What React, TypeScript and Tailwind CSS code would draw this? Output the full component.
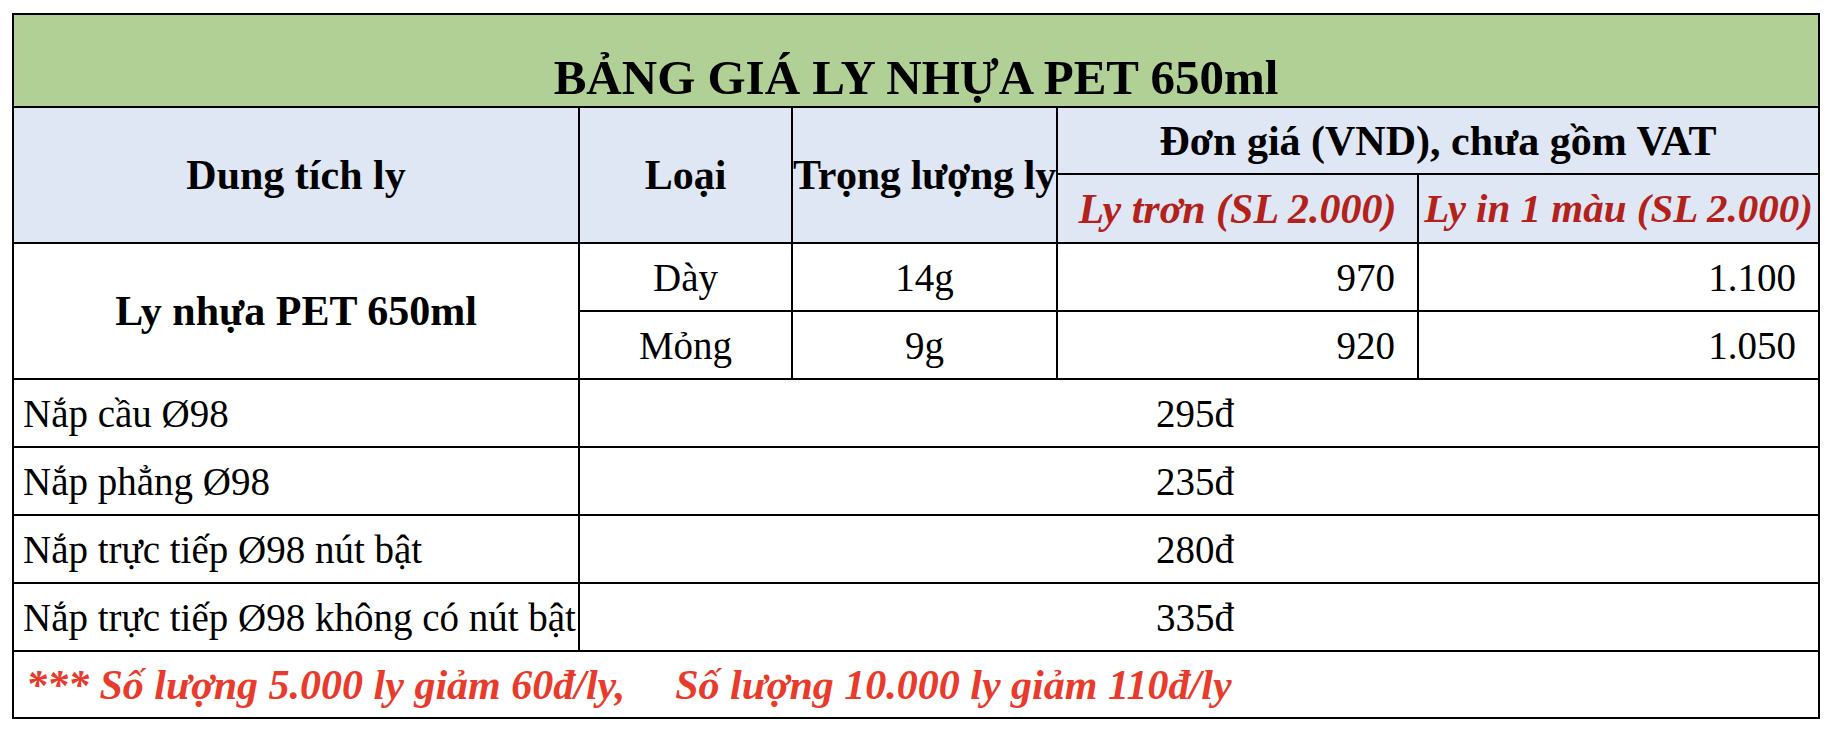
/**
 * Bảng giá ly nhựa PET 650ml — spreadsheet-style price table.
 */

const cell = 'border-2 border-black whitespace-nowrap p-0 align-middle leading-none';
const head = `${cell} bg-[#dfe6f4] text-center text-[42px] font-bold`;
const body = `${cell} text-[39px]`;

const lids = [
  { name: 'Nắp cầu Ø98', price: '295đ' },
  { name: 'Nắp phẳng Ø98', price: '235đ' },
  { name: 'Nắp trực tiếp Ø98 nút bật', price: '280đ' },
  { name: 'Nắp trực tiếp Ø98 không có nút bật', price: '335đ' },
];

export default function App() {
  return (
    <div className="h-[732px] w-[1836px] bg-white pl-[12px] pt-[13px] font-['Liberation_Serif','Times_New_Roman',serif] text-black">
      <table className="w-[1806px] table-fixed border-collapse">
        <colgroup>
          <col className="w-[566px]" />
          <col className="w-[213px]" />
          <col className="w-[265px]" />
          <col className="w-[361px]" />
          <col className="w-[401px]" />
        </colgroup>
        <tbody>
          <tr className="h-[93px]">
            <td
              colSpan={5}
              className={`${cell} bg-[#b0d095] pb-[4px] text-center !align-bottom text-[49px] font-bold`}
            >
              BẢNG GIÁ LY NHỰA PET 650ml
            </td>
          </tr>
          <tr className="h-[67px]">
            <td rowSpan={2} className={head}>
              Dung tích ly
            </td>
            <td rowSpan={2} className={head}>
              Loại
            </td>
            <td rowSpan={2} className={`${head} tracking-[-0.3px]`}>
              Trọng lượng ly
            </td>
            <td colSpan={2} className={head}>
              Đơn giá (VND), chưa gồm VAT
            </td>
          </tr>
          <tr className="h-[69px]">
            <td className={`${head} italic text-[#b2221b]`}>Ly trơn (SL 2.000)</td>
            <td className={`${head} italic !text-[41px] text-[#b2221b]`}>Ly in 1 màu (SL 2.000)</td>
          </tr>
          <tr className="h-[68px]">
            <td rowSpan={2} className={`${cell} text-center text-[42px] font-bold`}>
              Ly nhựa PET 650ml
            </td>
            <td className={`${body} text-center`}>Dày</td>
            <td className={`${body} text-center`}>14g</td>
            <td className={`${body} pr-[22px] text-right`}>970</td>
            <td className={`${body} pr-[22px] text-right`}>1.100</td>
          </tr>
          <tr className="h-[68px]">
            <td className={`${body} text-center`}>Mỏng</td>
            <td className={`${body} text-center`}>9g</td>
            <td className={`${body} pr-[22px] text-right`}>920</td>
            <td className={`${body} pr-[22px] text-right`}>1.050</td>
          </tr>
          {lids.map((lid) => (
            <tr key={lid.name} className="h-[68px]">
              <td className={`${body} pl-[9px] text-left text-[38.6px]`}>{lid.name}</td>
              <td colSpan={4} className={`${body} pr-[8px] text-center`}>
                {lid.price}
              </td>
            </tr>
          ))}
          <tr className="h-[67px]">
            <td
              colSpan={5}
              className={`${cell} pl-[12px] text-left text-[42px] font-bold italic text-[#e93a2b]`}
            >
              *** Số lượng 5.000 ly giảm 60đ/ly,
              <span className="ml-[50px]">Số lượng 10.000 ly giảm 110đ/ly</span>
            </td>
          </tr>
        </tbody>
      </table>
    </div>
  );
}
